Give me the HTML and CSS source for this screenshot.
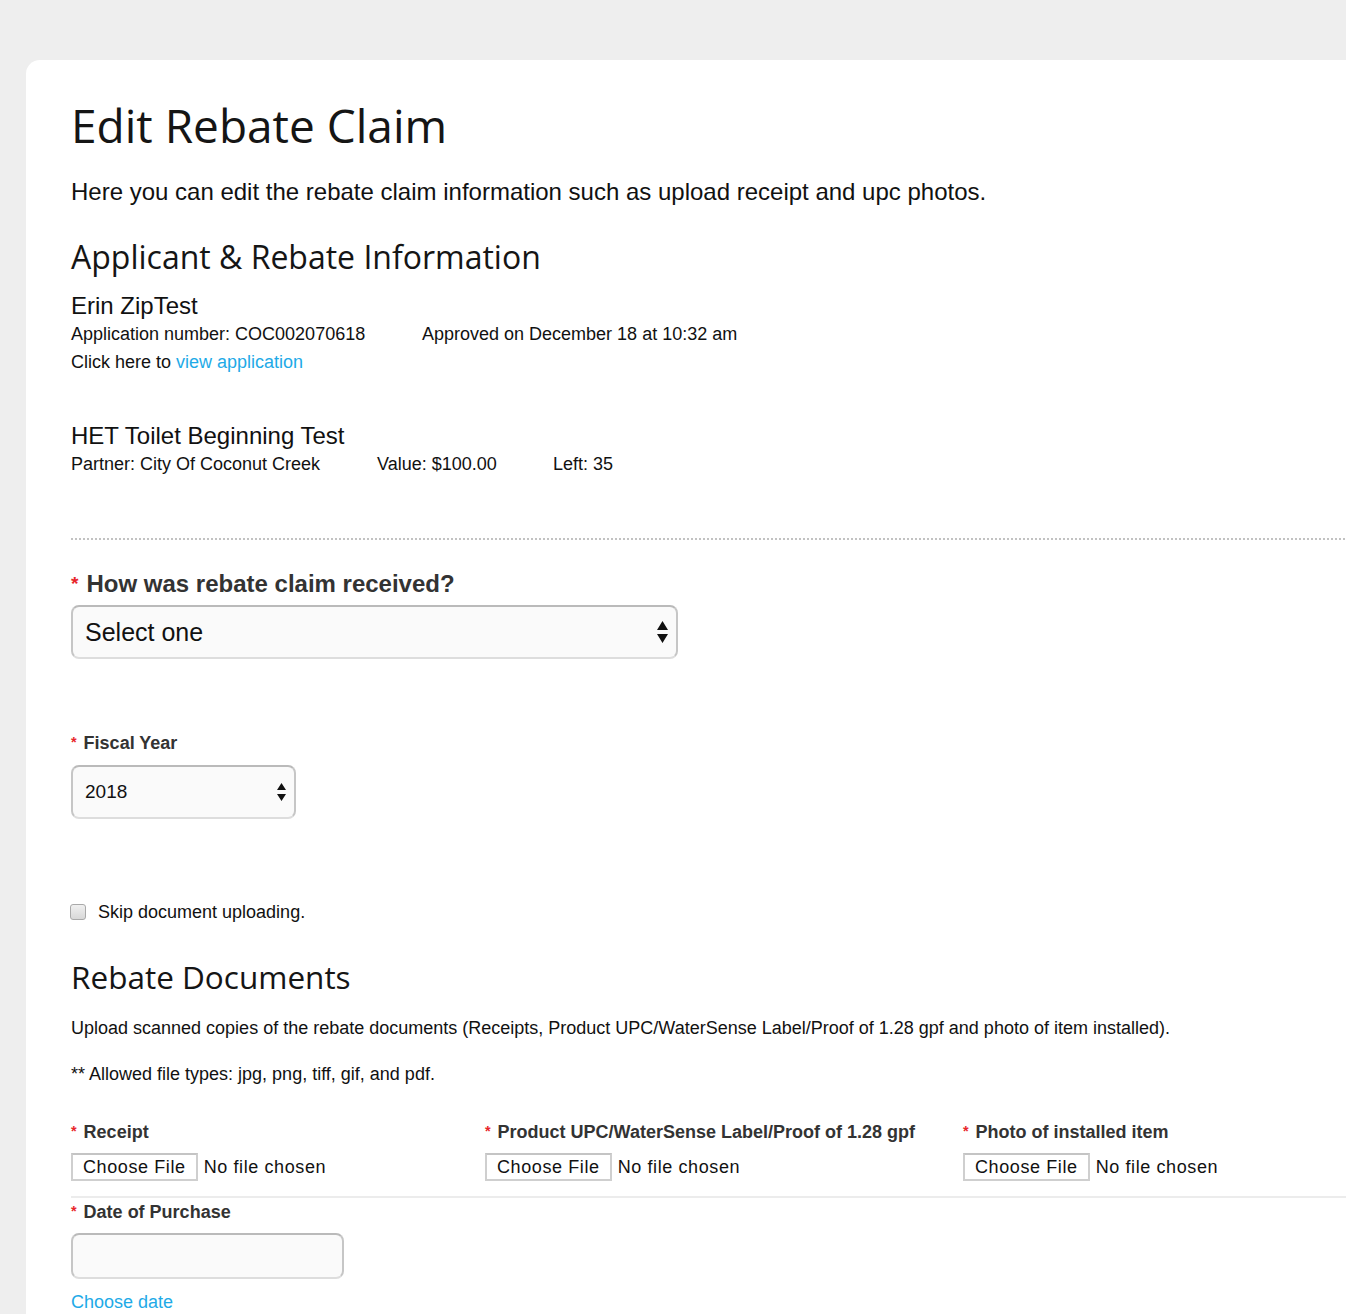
FILE: index.html
```html
<!DOCTYPE html>
<html>
<head>
<meta charset="utf-8">
<link rel="stylesheet" href="styles.css">
</head>
<body>
<div class="card">
  <h1 class="title">Edit Rebate Claim</h1>
  <p class="lead">Here you can edit the rebate claim information such as upload receipt and upc photos.</p>

  <h2 class="section">Applicant &amp; Rebate Information</h2>
  <div class="name">Erin ZipTest</div>
  <div class="meta-row">
    <span class="meta-a">Application number: COC002070618</span>
    <span>Approved on December 18 at 10:32 am</span>
  </div>
  <div class="meta-line">Click here to <a class="link" href="#">view application</a></div>

  <div class="name name-gap">HET Toilet Beginning Test</div>
  <div class="meta-row">
    <span class="meta-p">Partner: City Of Coconut Creek</span>
    <span class="meta-v">Value: $100.00</span>
    <span>Left: 35</span>
  </div>

  <div class="dots"></div>

  <div class="label label-lg"><span class="req">*</span>How was rebate claim received?</div>
  <div class="select select-lg">
    <span>Select one</span>
    <svg class="arrows" width="11" height="22" viewBox="0 0 11 22"><path d="M5.5 0 L11 9 L0 9 Z M0 13 L11 13 L5.5 22 Z" fill="#111"/></svg>
  </div>

  <div class="label label-fy"><span class="req">*</span>Fiscal Year</div>
  <div class="select select-sm">
    <span>2018</span>
    <svg class="arrows" width="9" height="18" viewBox="0 0 9 18"><path d="M4.5 0 L9 7 L0 7 Z M0 11 L9 11 L4.5 18 Z" fill="#111"/></svg>
  </div>

  <div class="check-row">
    <span class="checkbox"></span>
    <span>Skip document uploading.</span>
  </div>

  <h2 class="section docs">Rebate Documents</h2>
  <p class="text upload">Upload scanned copies of the rebate documents (Receipts, Product UPC/WaterSense Label/Proof of 1.28 gpf and photo of item installed).</p>
  <p class="text allowed">** Allowed file types: jpg, png, tiff, gif, and pdf.</p>

  <div class="files">
    <div class="file-col col1">
      <div class="label"><span class="req">*</span>Receipt</div>
      <div class="file"><span class="file-btn">Choose File</span><span class="file-none">No file chosen</span></div>
    </div>
    <div class="file-col col2">
      <div class="label"><span class="req">*</span>Product UPC/WaterSense Label/Proof of 1.28 gpf</div>
      <div class="file"><span class="file-btn">Choose File</span><span class="file-none">No file chosen</span></div>
    </div>
    <div class="file-col col3">
      <div class="label"><span class="req">*</span>Photo of installed item</div>
      <div class="file"><span class="file-btn">Choose File</span><span class="file-none">No file chosen</span></div>
    </div>
  </div>

  <div class="rule"></div>

  <div class="label date-label"><span class="req">*</span>Date of Purchase</div>
  <div class="date-input"></div>
  <a class="link choose-date" href="#">Choose date</a>
</div>
</body>
</html>
```

FILE: styles.css
```css
html, body {
  margin: 0;
  padding: 0;
}
body {
  background: #eeeeee;
  font-family: "Liberation Sans", Arial, sans-serif;
  color: #111;
  overflow: hidden;
}
.card {
  margin: 60px 0 0 26px;
  padding: 35px 0 40px 45px;
  background: #fff;
  border-top-left-radius: 14px;
  min-height: 1300px;
}
.title {
  margin: 0;
  font-family: "Open Sans", "Noto Sans", sans-serif;
  font-weight: 400;
  font-size: 46px;
  line-height: 60px;
  color: #151515;
}
.lead {
  margin: 23px 0 0;
  font-size: 24px;
  line-height: 28px;
}
.section {
  margin: 31px 0 0;
  font-family: "Open Sans", "Noto Sans", sans-serif;
  font-weight: 400;
  font-size: 32px;
  line-height: 40px;
  color: #151515;
}
.name {
  margin-top: 15px;
  font-size: 24px;
  line-height: 28px;
}
.name-gap {
  margin-top: 46px;
}
.meta-row {
  display: flex;
  font-size: 18px;
  line-height: 28px;
}
.meta-line {
  font-size: 18px;
  line-height: 28px;
}
.meta-a { width: 351px; }
.meta-p { width: 306px; }
.meta-v { width: 176px; }
.link {
  color: #1eaae7;
  text-decoration: none;
}
.dots {
  margin-top: 60px;
  height: 2px;
  background: repeating-linear-gradient(to right, #c2c2c2 0 2px, transparent 2px 4px);
}
.label {
  font-weight: 700;
  font-size: 18px;
  line-height: 24px;
  color: #333;
  white-space: nowrap;
}
.req {
  color: #e8262b;
  font-size: 0.8em;
  line-height: 0;
  margin-right: 7px;
  position: relative;
  top: -2px;
}
.label-lg {
  margin-top: 29px;
  font-size: 24px;
  line-height: 30px;
}
.label-lg .req {
  margin-right: 8px;
}
.select {
  display: flex;
  align-items: center;
  justify-content: space-between;
  box-sizing: border-box;
  background: #fafafa;
  border: 2px solid #c6c6c6;
  border-top-color: #bababa;
  border-bottom-color: #dddddd;
  border-radius: 8px;
  color: #111;
}
.select-lg {
  margin-top: 6px;
  width: 607px;
  height: 54px;
  padding: 0 8px 0 12px;
  font-size: 25px;
}
.select-sm {
  margin-top: 10px;
  width: 225px;
  height: 54px;
  padding: 0 8px 0 12px;
  font-size: 19px;
}
.label-fy {
  margin-top: 72px;
}
.check-row {
  margin-top: 81px;
  display: flex;
  align-items: center;
  font-size: 18px;
  line-height: 24px;
}
.checkbox {
  box-sizing: border-box;
  width: 16px;
  height: 16px;
  margin-right: 12px;
  margin-left: -1px;
  border: 1px solid #a9a9a9;
  border-radius: 3px;
  background: linear-gradient(#f0f0f0, #d8d8d8);
}
.docs {
  margin-top: 33px;
  font-size: 31.5px;
}
.text {
  font-size: 18px;
  line-height: 24px;
}
.upload {
  margin: 19px 0 0;
}
.allowed {
  margin: 22px 0 0;
}
.files {
  display: flex;
  margin-top: 34px;
}
.col1 { width: 414px; }
.col2 { width: 478px; }
.file {
  display: flex;
  align-items: center;
  margin-top: 9px;
  height: 28px;
  font-size: 18px;
  letter-spacing: 0.6px;
}
.file-btn {
  box-sizing: border-box;
  height: 28px;
  display: flex;
  align-items: center;
  padding: 0 10px;
  border: 2px solid #cfcfcf;
  border-top-color: #c4c4c4;
  background: #fff;
  color: #111;
}
.file-none {
  margin-left: 6px;
  color: #111;
}
.rule {
  margin-top: 15px;
  height: 2px;
  background: #ececec;
}
.date-label {
  margin-top: 2px;
}
.date-input {
  margin-top: 9px;
  box-sizing: border-box;
  width: 273px;
  height: 46px;
  background: #fafafa;
  border: 2px solid #c6c6c6;
  border-top-color: #bababa;
  border-bottom-color: #dddddd;
  border-radius: 8px;
}
.choose-date {
  display: block;
  margin-top: 11px;
  font-size: 18px;
  line-height: 24px;
}
```
